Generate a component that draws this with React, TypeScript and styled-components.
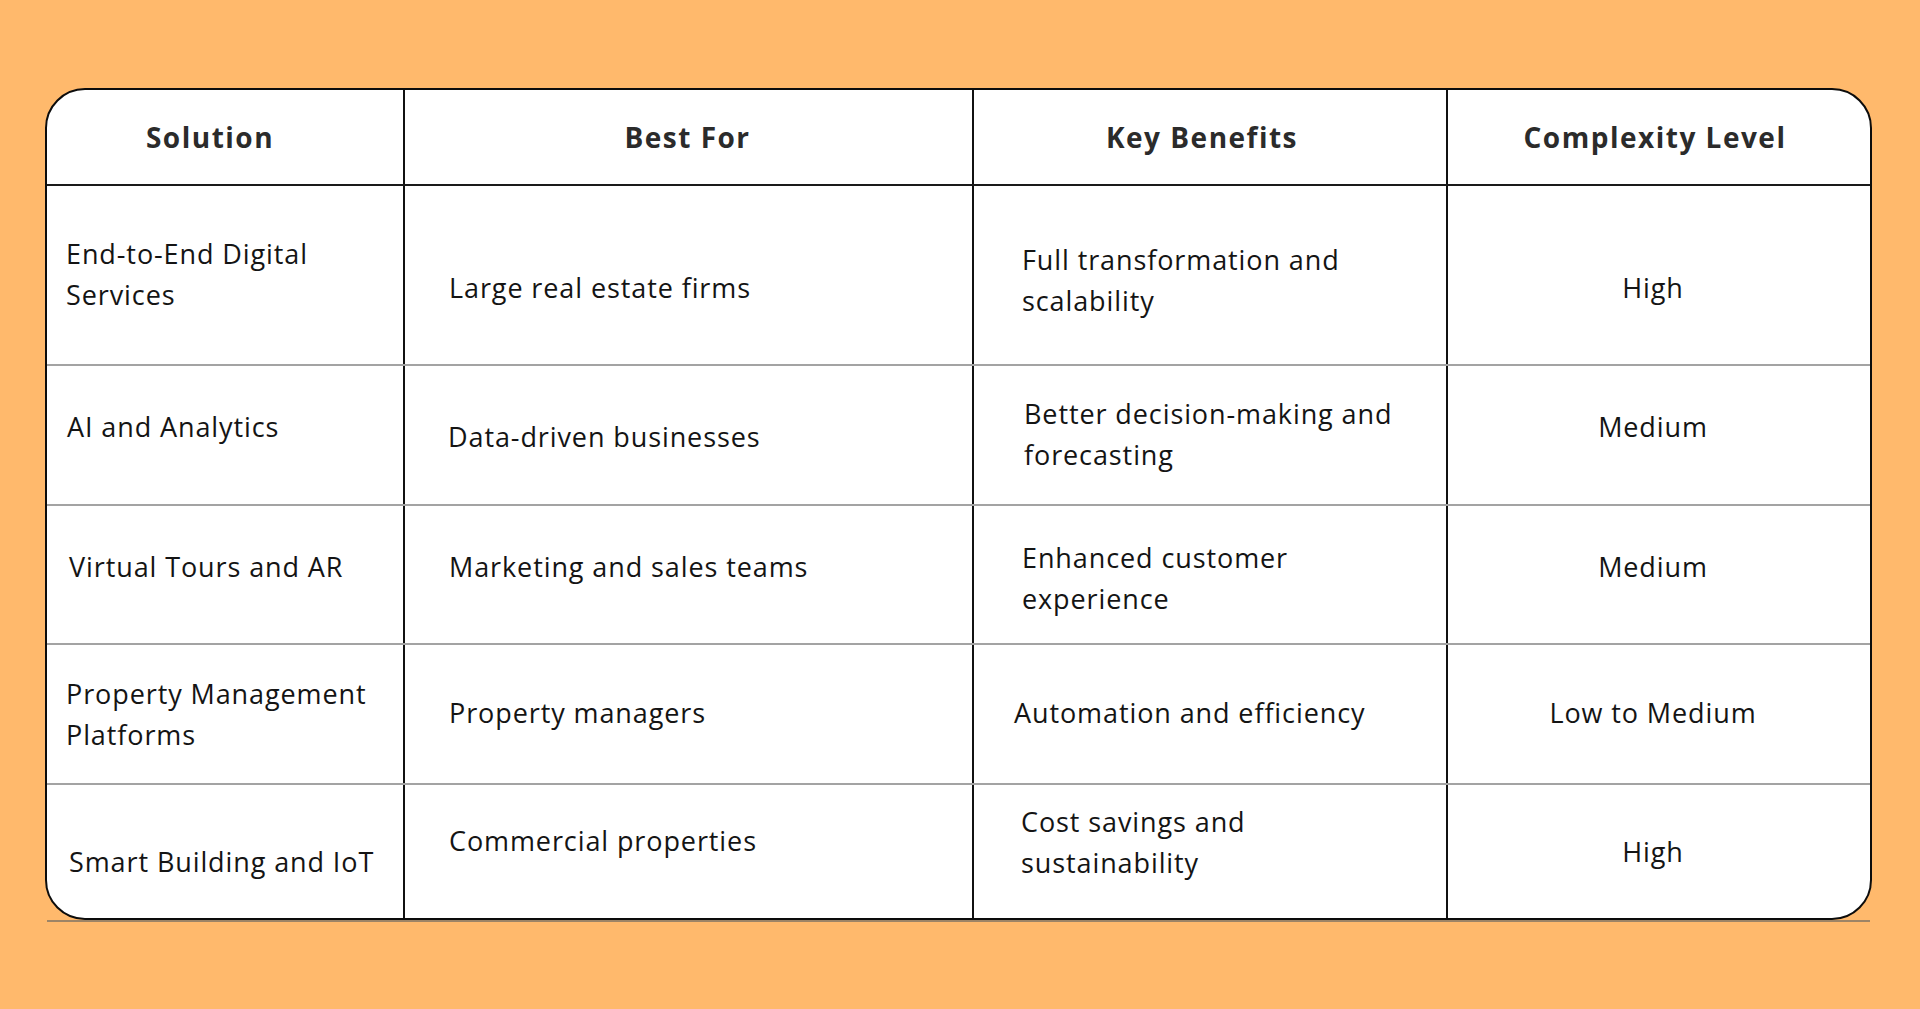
import React from "react";
import styled, { createGlobalStyle } from "styled-components";

const Global = createGlobalStyle`
  html, body { margin: 0; padding: 0; background: #ffb96c; }
  body { font-family: "Open Sans", "Noto Sans", sans-serif; }
`;

const Page = styled.div`
  min-height: 1009px;
  box-sizing: border-box;
  padding: 88px 48px 0 45px;
  background: #ffb96c;
`;

const Frame = styled.div`
  position: relative;
  width: 1827px;
  &::after {
    content: "";
    position: absolute;
    left: 2px;
    right: 2px;
    bottom: -2px;
    height: 2px;
    background: #9d8466;
  }
`;

const Table = styled.div`
  position: relative;
  z-index: 1;
  box-sizing: border-box;
  width: 1827px;
  border: 2px solid #0c0c0c;
  border-radius: 40px;
  overflow: hidden;
  background: #ffffff;
  display: flex;
  flex-direction: column;
`;

const Row = styled.div<{ $h: number; $head?: boolean; $last?: boolean }>`
  display: grid;
  grid-template-columns: 358px 569px 474px 422px;
  height: ${(p) => p.$h}px;
  box-sizing: border-box;
  border-bottom: ${(p) =>
    p.$last ? "none" : p.$head ? "2px solid #1a1a1a" : "2px solid #a3a3a3"};
`;

const Cell = styled.div<{ $center?: boolean; $pad: number }>`
  box-sizing: border-box;
  display: flex;
  align-items: center;
  justify-content: ${(p) => (p.$center ? "center" : "flex-start")};
  padding-left: ${(p) => (p.$center ? 0 : p.$pad)}px;
  border-right: 2px solid #111111;
  &:last-child { border-right: none; }
`;

const Text = styled.div<{ $dx: number; $dy: number }>`
  font-size: 27px;
  line-height: 41px;
  color: #141414;
  white-space: nowrap;
  letter-spacing: 0.9px;
  transform: translate(${(p) => p.$dx}px, ${(p) => p.$dy}px);
`;

const HeadText = styled(Text)`
  font-weight: 700;
  color: #2b2b2b;
  font-size: 28px;
  letter-spacing: 1.5px;
`;

type C = { lines: string[]; dx?: number; dy?: number };

const heads: { t: string; dx: number }[] = [
  { t: "Solution", dx: -15 },
  { t: "Best For", dx: -1 },
  { t: "Key Benefits", dx: -8 },
  { t: "Complexity Level", dx: -4 },
];

const rows: { h: number; cells: C[] }[] = [
  {
    h: 180,
    cells: [
      { lines: ["End-to-End Digital", "Services"], dy: -1 },
      { lines: ["Large real estate firms"], dy: 12 },
      { lines: ["Full transformation and", "scalability"], dy: 5 },
      { lines: ["High"], dy: 12, dx: -6 },
    ],
  },
  {
    h: 140,
    cells: [
      { lines: ["AI and Analytics"], dy: -9, dx: 1 },
      { lines: ["Data-driven businesses"], dy: 1, dx: -1 },
      { lines: ["Better decision-making and", "forecasting"], dy: -1, dx: 2 },
      { lines: ["Medium"], dy: -9, dx: -6 },
    ],
  },
  {
    h: 139,
    cells: [
      { lines: ["Virtual Tours and AR"], dy: -8, dx: 3 },
      { lines: ["Marketing and sales teams"], dy: -8 },
      { lines: ["Enhanced customer", "experience"], dy: 3 },
      { lines: ["Medium"], dy: -8, dx: -6 },
    ],
  },
  {
    h: 140,
    cells: [
      { lines: ["Property Management", "Platforms"], dy: 0 },
      { lines: ["Property managers"], dy: -2 },
      { lines: ["Automation and efficiency"], dy: -2, dx: -8 },
      { lines: ["Low to Medium"], dy: -2, dx: -6 },
    ],
  },
  {
    h: 133,
    cells: [
      { lines: ["Smart Building and IoT"], dy: 10, dx: 3 },
      { lines: ["Commercial properties"], dy: -11 },
      { lines: ["Cost savings and", "sustainability"], dy: -10, dx: -1 },
      { lines: ["High"], dy: 0, dx: -6 },
    ],
  },
];

const pads = [19, 44, 48, 0];

export default function App() {
  return (
    <Page>
      <Global />
      <Frame>
        <Table>
          <Row $h={96} $head>
            {heads.map((h) => (
              <Cell key={h.t} $center $pad={0}>
                <HeadText $dx={h.dx} $dy={0}>{h.t}</HeadText>
              </Cell>
            ))}
          </Row>
          {rows.map((r, ri) => (
            <Row key={ri} $h={r.h} $last={ri === rows.length - 1}>
              {r.cells.map((c, ci) => (
                <Cell key={ci} $center={ci === 3} $pad={pads[ci]}>
                  <Text $dx={c.dx ?? 0} $dy={c.dy ?? 0}>
                    {c.lines.map((l, li) => (
                      <div key={li}>{l}</div>
                    ))}
                  </Text>
                </Cell>
              ))}
            </Row>
          ))}
        </Table>
      </Frame>
    </Page>
  );
}
